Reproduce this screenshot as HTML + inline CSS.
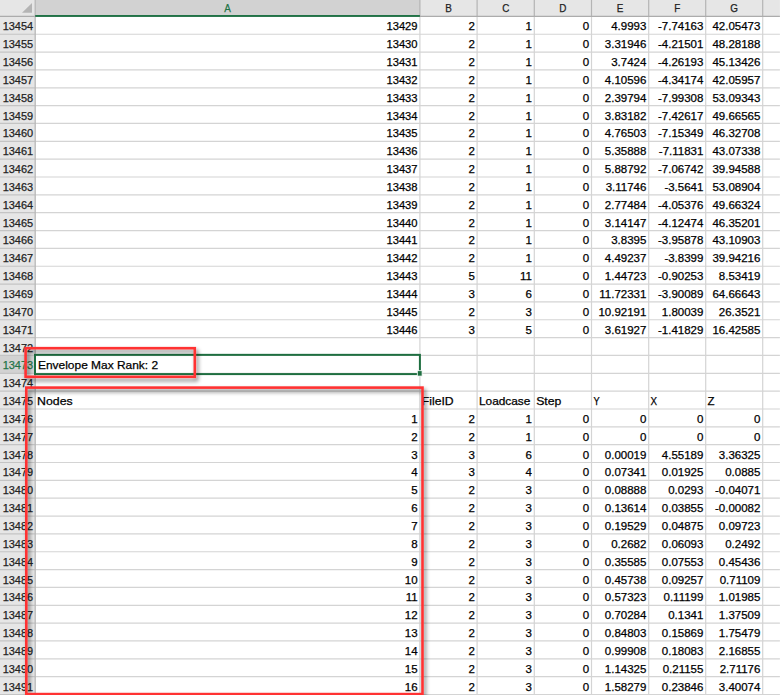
<!DOCTYPE html>
<html><head><meta charset="utf-8"><style>
html,body{margin:0;padding:0;width:783px;height:695px;overflow:hidden;background:#fff}
svg{display:block;font-family:"Liberation Sans",sans-serif}
text{font-size:11.5px;fill:#000;stroke:#000;stroke-width:0.25px}
</style></head><body>
<svg width="783" height="695" viewBox="0 0 783 695">

<rect x="0" y="0" width="779.9" height="16.4" fill="#e6e6e6"/>
<rect x="35.2" y="0" width="384.7" height="16.4" fill="#d2d2d2"/>
<rect x="0" y="16.4" width="35.2" height="678.6" fill="#e6e6e6"/>
<rect x="0" y="355.45" width="35.2" height="17.845" fill="#d2d2d2"/>
<line x1="35.2" y1="34.24" x2="779.9" y2="34.24" stroke="#d4d4d4" stroke-width="1.2"/>
<line x1="35.2" y1="52.09" x2="779.9" y2="52.09" stroke="#d4d4d4" stroke-width="1.2"/>
<line x1="35.2" y1="69.94" x2="779.9" y2="69.94" stroke="#d4d4d4" stroke-width="1.2"/>
<line x1="35.2" y1="87.78" x2="779.9" y2="87.78" stroke="#d4d4d4" stroke-width="1.2"/>
<line x1="35.2" y1="105.62" x2="779.9" y2="105.62" stroke="#d4d4d4" stroke-width="1.2"/>
<line x1="35.2" y1="123.47" x2="779.9" y2="123.47" stroke="#d4d4d4" stroke-width="1.2"/>
<line x1="35.2" y1="141.31" x2="779.9" y2="141.31" stroke="#d4d4d4" stroke-width="1.2"/>
<line x1="35.2" y1="159.16" x2="779.9" y2="159.16" stroke="#d4d4d4" stroke-width="1.2"/>
<line x1="35.2" y1="177.00" x2="779.9" y2="177.00" stroke="#d4d4d4" stroke-width="1.2"/>
<line x1="35.2" y1="194.85" x2="779.9" y2="194.85" stroke="#d4d4d4" stroke-width="1.2"/>
<line x1="35.2" y1="212.69" x2="779.9" y2="212.69" stroke="#d4d4d4" stroke-width="1.2"/>
<line x1="35.2" y1="230.54" x2="779.9" y2="230.54" stroke="#d4d4d4" stroke-width="1.2"/>
<line x1="35.2" y1="248.38" x2="779.9" y2="248.38" stroke="#d4d4d4" stroke-width="1.2"/>
<line x1="35.2" y1="266.23" x2="779.9" y2="266.23" stroke="#d4d4d4" stroke-width="1.2"/>
<line x1="35.2" y1="284.07" x2="779.9" y2="284.07" stroke="#d4d4d4" stroke-width="1.2"/>
<line x1="35.2" y1="301.92" x2="779.9" y2="301.92" stroke="#d4d4d4" stroke-width="1.2"/>
<line x1="35.2" y1="319.76" x2="779.9" y2="319.76" stroke="#d4d4d4" stroke-width="1.2"/>
<line x1="35.2" y1="337.61" x2="779.9" y2="337.61" stroke="#d4d4d4" stroke-width="1.2"/>
<line x1="35.2" y1="355.45" x2="779.9" y2="355.45" stroke="#d4d4d4" stroke-width="1.2"/>
<line x1="35.2" y1="373.30" x2="779.9" y2="373.30" stroke="#d4d4d4" stroke-width="1.2"/>
<line x1="35.2" y1="391.14" x2="779.9" y2="391.14" stroke="#d4d4d4" stroke-width="1.2"/>
<line x1="35.2" y1="408.99" x2="779.9" y2="408.99" stroke="#d4d4d4" stroke-width="1.2"/>
<line x1="35.2" y1="426.83" x2="779.9" y2="426.83" stroke="#d4d4d4" stroke-width="1.2"/>
<line x1="35.2" y1="444.68" x2="779.9" y2="444.68" stroke="#d4d4d4" stroke-width="1.2"/>
<line x1="35.2" y1="462.52" x2="779.9" y2="462.52" stroke="#d4d4d4" stroke-width="1.2"/>
<line x1="35.2" y1="480.37" x2="779.9" y2="480.37" stroke="#d4d4d4" stroke-width="1.2"/>
<line x1="35.2" y1="498.21" x2="779.9" y2="498.21" stroke="#d4d4d4" stroke-width="1.2"/>
<line x1="35.2" y1="516.06" x2="779.9" y2="516.06" stroke="#d4d4d4" stroke-width="1.2"/>
<line x1="35.2" y1="533.90" x2="779.9" y2="533.90" stroke="#d4d4d4" stroke-width="1.2"/>
<line x1="35.2" y1="551.75" x2="779.9" y2="551.75" stroke="#d4d4d4" stroke-width="1.2"/>
<line x1="35.2" y1="569.59" x2="779.9" y2="569.59" stroke="#d4d4d4" stroke-width="1.2"/>
<line x1="35.2" y1="587.44" x2="779.9" y2="587.44" stroke="#d4d4d4" stroke-width="1.2"/>
<line x1="35.2" y1="605.28" x2="779.9" y2="605.28" stroke="#d4d4d4" stroke-width="1.2"/>
<line x1="35.2" y1="623.13" x2="779.9" y2="623.13" stroke="#d4d4d4" stroke-width="1.2"/>
<line x1="35.2" y1="640.97" x2="779.9" y2="640.97" stroke="#d4d4d4" stroke-width="1.2"/>
<line x1="35.2" y1="658.82" x2="779.9" y2="658.82" stroke="#d4d4d4" stroke-width="1.2"/>
<line x1="35.2" y1="676.66" x2="779.9" y2="676.66" stroke="#d4d4d4" stroke-width="1.2"/>
<line x1="35.2" y1="694.51" x2="779.9" y2="694.51" stroke="#d4d4d4" stroke-width="1.2"/>
<line x1="419.9" y1="16.4" x2="419.9" y2="695" stroke="#d4d4d4" stroke-width="1.2"/>
<line x1="477.1" y1="16.4" x2="477.1" y2="695" stroke="#d4d4d4" stroke-width="1.2"/>
<line x1="534.3" y1="16.4" x2="534.3" y2="695" stroke="#d4d4d4" stroke-width="1.2"/>
<line x1="591.5" y1="16.4" x2="591.5" y2="695" stroke="#d4d4d4" stroke-width="1.2"/>
<line x1="648.7" y1="16.4" x2="648.7" y2="695" stroke="#d4d4d4" stroke-width="1.2"/>
<line x1="705.7" y1="16.4" x2="705.7" y2="695" stroke="#d4d4d4" stroke-width="1.2"/>
<line x1="762.7" y1="16.4" x2="762.7" y2="695" stroke="#d4d4d4" stroke-width="1.2"/>
<line x1="0" y1="34.24" x2="35.2" y2="34.24" stroke="#c4c4c4" stroke-width="1.2"/>
<line x1="0" y1="52.09" x2="35.2" y2="52.09" stroke="#c4c4c4" stroke-width="1.2"/>
<line x1="0" y1="69.94" x2="35.2" y2="69.94" stroke="#c4c4c4" stroke-width="1.2"/>
<line x1="0" y1="87.78" x2="35.2" y2="87.78" stroke="#c4c4c4" stroke-width="1.2"/>
<line x1="0" y1="105.62" x2="35.2" y2="105.62" stroke="#c4c4c4" stroke-width="1.2"/>
<line x1="0" y1="123.47" x2="35.2" y2="123.47" stroke="#c4c4c4" stroke-width="1.2"/>
<line x1="0" y1="141.31" x2="35.2" y2="141.31" stroke="#c4c4c4" stroke-width="1.2"/>
<line x1="0" y1="159.16" x2="35.2" y2="159.16" stroke="#c4c4c4" stroke-width="1.2"/>
<line x1="0" y1="177.00" x2="35.2" y2="177.00" stroke="#c4c4c4" stroke-width="1.2"/>
<line x1="0" y1="194.85" x2="35.2" y2="194.85" stroke="#c4c4c4" stroke-width="1.2"/>
<line x1="0" y1="212.69" x2="35.2" y2="212.69" stroke="#c4c4c4" stroke-width="1.2"/>
<line x1="0" y1="230.54" x2="35.2" y2="230.54" stroke="#c4c4c4" stroke-width="1.2"/>
<line x1="0" y1="248.38" x2="35.2" y2="248.38" stroke="#c4c4c4" stroke-width="1.2"/>
<line x1="0" y1="266.23" x2="35.2" y2="266.23" stroke="#c4c4c4" stroke-width="1.2"/>
<line x1="0" y1="284.07" x2="35.2" y2="284.07" stroke="#c4c4c4" stroke-width="1.2"/>
<line x1="0" y1="301.92" x2="35.2" y2="301.92" stroke="#c4c4c4" stroke-width="1.2"/>
<line x1="0" y1="319.76" x2="35.2" y2="319.76" stroke="#c4c4c4" stroke-width="1.2"/>
<line x1="0" y1="337.61" x2="35.2" y2="337.61" stroke="#c4c4c4" stroke-width="1.2"/>
<line x1="0" y1="355.45" x2="35.2" y2="355.45" stroke="#c4c4c4" stroke-width="1.2"/>
<line x1="0" y1="373.30" x2="35.2" y2="373.30" stroke="#c4c4c4" stroke-width="1.2"/>
<line x1="0" y1="391.14" x2="35.2" y2="391.14" stroke="#c4c4c4" stroke-width="1.2"/>
<line x1="0" y1="408.99" x2="35.2" y2="408.99" stroke="#c4c4c4" stroke-width="1.2"/>
<line x1="0" y1="426.83" x2="35.2" y2="426.83" stroke="#c4c4c4" stroke-width="1.2"/>
<line x1="0" y1="444.68" x2="35.2" y2="444.68" stroke="#c4c4c4" stroke-width="1.2"/>
<line x1="0" y1="462.52" x2="35.2" y2="462.52" stroke="#c4c4c4" stroke-width="1.2"/>
<line x1="0" y1="480.37" x2="35.2" y2="480.37" stroke="#c4c4c4" stroke-width="1.2"/>
<line x1="0" y1="498.21" x2="35.2" y2="498.21" stroke="#c4c4c4" stroke-width="1.2"/>
<line x1="0" y1="516.06" x2="35.2" y2="516.06" stroke="#c4c4c4" stroke-width="1.2"/>
<line x1="0" y1="533.90" x2="35.2" y2="533.90" stroke="#c4c4c4" stroke-width="1.2"/>
<line x1="0" y1="551.75" x2="35.2" y2="551.75" stroke="#c4c4c4" stroke-width="1.2"/>
<line x1="0" y1="569.59" x2="35.2" y2="569.59" stroke="#c4c4c4" stroke-width="1.2"/>
<line x1="0" y1="587.44" x2="35.2" y2="587.44" stroke="#c4c4c4" stroke-width="1.2"/>
<line x1="0" y1="605.28" x2="35.2" y2="605.28" stroke="#c4c4c4" stroke-width="1.2"/>
<line x1="0" y1="623.13" x2="35.2" y2="623.13" stroke="#c4c4c4" stroke-width="1.2"/>
<line x1="0" y1="640.97" x2="35.2" y2="640.97" stroke="#c4c4c4" stroke-width="1.2"/>
<line x1="0" y1="658.82" x2="35.2" y2="658.82" stroke="#c4c4c4" stroke-width="1.2"/>
<line x1="0" y1="676.66" x2="35.2" y2="676.66" stroke="#c4c4c4" stroke-width="1.2"/>
<line x1="0" y1="694.51" x2="35.2" y2="694.51" stroke="#c4c4c4" stroke-width="1.2"/>
<line x1="419.9" y1="0" x2="419.9" y2="16.4" stroke="#b4b4b4" stroke-width="1.2"/>
<line x1="477.1" y1="0" x2="477.1" y2="16.4" stroke="#b4b4b4" stroke-width="1.2"/>
<line x1="534.3" y1="0" x2="534.3" y2="16.4" stroke="#b4b4b4" stroke-width="1.2"/>
<line x1="591.5" y1="0" x2="591.5" y2="16.4" stroke="#b4b4b4" stroke-width="1.2"/>
<line x1="648.7" y1="0" x2="648.7" y2="16.4" stroke="#b4b4b4" stroke-width="1.2"/>
<line x1="705.7" y1="0" x2="705.7" y2="16.4" stroke="#b4b4b4" stroke-width="1.2"/>
<line x1="762.7" y1="0" x2="762.7" y2="16.4" stroke="#b4b4b4" stroke-width="1.2"/>
<line x1="0" y1="16.4" x2="779.9" y2="16.4" stroke="#acacac" stroke-width="1.2"/>
<line x1="35.2" y1="0" x2="35.2" y2="695" stroke="#b8b8b8" stroke-width="1.3"/>
<rect x="35.2" y="15" width="384.7" height="1.9" fill="#217346"/>
<polygon points="32,3.1 32,12.8 22,12.8" fill="#b4b4b4"/>
<text x="227.5" y="11.6" text-anchor="middle" textLength="6.60" lengthAdjust="spacingAndGlyphs" style="fill:#217346;stroke:#217346">A</text>
<text x="448.5" y="11.6" text-anchor="middle" textLength="6.60" lengthAdjust="spacingAndGlyphs" style="fill:#222;stroke:#222">B</text>
<text x="505.7" y="11.6" text-anchor="middle" textLength="7.14" lengthAdjust="spacingAndGlyphs" style="fill:#222;stroke:#222">C</text>
<text x="562.9" y="11.6" text-anchor="middle" textLength="7.14" lengthAdjust="spacingAndGlyphs" style="fill:#222;stroke:#222">D</text>
<text x="620.1" y="11.6" text-anchor="middle" textLength="6.60" lengthAdjust="spacingAndGlyphs" style="fill:#222;stroke:#222">E</text>
<text x="677.2" y="11.6" text-anchor="middle" textLength="6.04" lengthAdjust="spacingAndGlyphs" style="fill:#222;stroke:#222">F</text>
<text x="734.2" y="11.6" text-anchor="middle" textLength="7.69" lengthAdjust="spacingAndGlyphs" style="fill:#222;stroke:#222">G</text>
<text x="33.2" y="30.35" text-anchor="end" textLength="30.54" lengthAdjust="spacingAndGlyphs" style="fill:#222;stroke:#222">13454</text>
<text x="33.2" y="48.19" text-anchor="end" textLength="30.54" lengthAdjust="spacingAndGlyphs" style="fill:#222;stroke:#222">13455</text>
<text x="33.2" y="66.04" text-anchor="end" textLength="30.54" lengthAdjust="spacingAndGlyphs" style="fill:#222;stroke:#222">13456</text>
<text x="33.2" y="83.89" text-anchor="end" textLength="30.54" lengthAdjust="spacingAndGlyphs" style="fill:#222;stroke:#222">13457</text>
<text x="33.2" y="101.73" text-anchor="end" textLength="30.54" lengthAdjust="spacingAndGlyphs" style="fill:#222;stroke:#222">13458</text>
<text x="33.2" y="119.58" text-anchor="end" textLength="30.54" lengthAdjust="spacingAndGlyphs" style="fill:#222;stroke:#222">13459</text>
<text x="33.2" y="137.42" text-anchor="end" textLength="30.54" lengthAdjust="spacingAndGlyphs" style="fill:#222;stroke:#222">13460</text>
<text x="33.2" y="155.26" text-anchor="end" textLength="30.54" lengthAdjust="spacingAndGlyphs" style="fill:#222;stroke:#222">13461</text>
<text x="33.2" y="173.11" text-anchor="end" textLength="30.54" lengthAdjust="spacingAndGlyphs" style="fill:#222;stroke:#222">13462</text>
<text x="33.2" y="190.95" text-anchor="end" textLength="30.54" lengthAdjust="spacingAndGlyphs" style="fill:#222;stroke:#222">13463</text>
<text x="33.2" y="208.80" text-anchor="end" textLength="30.54" lengthAdjust="spacingAndGlyphs" style="fill:#222;stroke:#222">13464</text>
<text x="33.2" y="226.64" text-anchor="end" textLength="30.54" lengthAdjust="spacingAndGlyphs" style="fill:#222;stroke:#222">13465</text>
<text x="33.2" y="244.49" text-anchor="end" textLength="30.54" lengthAdjust="spacingAndGlyphs" style="fill:#222;stroke:#222">13466</text>
<text x="33.2" y="262.33" text-anchor="end" textLength="30.54" lengthAdjust="spacingAndGlyphs" style="fill:#222;stroke:#222">13467</text>
<text x="33.2" y="280.18" text-anchor="end" textLength="30.54" lengthAdjust="spacingAndGlyphs" style="fill:#222;stroke:#222">13468</text>
<text x="33.2" y="298.02" text-anchor="end" textLength="30.54" lengthAdjust="spacingAndGlyphs" style="fill:#222;stroke:#222">13469</text>
<text x="33.2" y="315.87" text-anchor="end" textLength="30.54" lengthAdjust="spacingAndGlyphs" style="fill:#222;stroke:#222">13470</text>
<text x="33.2" y="333.71" text-anchor="end" textLength="30.54" lengthAdjust="spacingAndGlyphs" style="fill:#222;stroke:#222">13471</text>
<text x="33.2" y="351.56" text-anchor="end" textLength="30.54" lengthAdjust="spacingAndGlyphs" style="fill:#222;stroke:#222">13472</text>
<text x="33.2" y="369.40" text-anchor="end" textLength="30.54" lengthAdjust="spacingAndGlyphs" style="fill:#217346;stroke:#217346">13473</text>
<text x="33.2" y="387.25" text-anchor="end" textLength="30.54" lengthAdjust="spacingAndGlyphs" style="fill:#222;stroke:#222">13474</text>
<text x="33.2" y="405.09" text-anchor="end" textLength="30.54" lengthAdjust="spacingAndGlyphs" style="fill:#222;stroke:#222">13475</text>
<text x="33.2" y="422.94" text-anchor="end" textLength="30.54" lengthAdjust="spacingAndGlyphs" style="fill:#222;stroke:#222">13476</text>
<text x="33.2" y="440.78" text-anchor="end" textLength="30.54" lengthAdjust="spacingAndGlyphs" style="fill:#222;stroke:#222">13477</text>
<text x="33.2" y="458.63" text-anchor="end" textLength="30.54" lengthAdjust="spacingAndGlyphs" style="fill:#222;stroke:#222">13478</text>
<text x="33.2" y="476.47" text-anchor="end" textLength="30.54" lengthAdjust="spacingAndGlyphs" style="fill:#222;stroke:#222">13479</text>
<text x="33.2" y="494.32" text-anchor="end" textLength="30.54" lengthAdjust="spacingAndGlyphs" style="fill:#222;stroke:#222">13480</text>
<text x="33.2" y="512.16" text-anchor="end" textLength="30.54" lengthAdjust="spacingAndGlyphs" style="fill:#222;stroke:#222">13481</text>
<text x="33.2" y="530.01" text-anchor="end" textLength="30.54" lengthAdjust="spacingAndGlyphs" style="fill:#222;stroke:#222">13482</text>
<text x="33.2" y="547.86" text-anchor="end" textLength="30.54" lengthAdjust="spacingAndGlyphs" style="fill:#222;stroke:#222">13483</text>
<text x="33.2" y="565.70" text-anchor="end" textLength="30.54" lengthAdjust="spacingAndGlyphs" style="fill:#222;stroke:#222">13484</text>
<text x="33.2" y="583.54" text-anchor="end" textLength="30.54" lengthAdjust="spacingAndGlyphs" style="fill:#222;stroke:#222">13485</text>
<text x="33.2" y="601.39" text-anchor="end" textLength="30.54" lengthAdjust="spacingAndGlyphs" style="fill:#222;stroke:#222">13486</text>
<text x="33.2" y="619.24" text-anchor="end" textLength="30.54" lengthAdjust="spacingAndGlyphs" style="fill:#222;stroke:#222">13487</text>
<text x="33.2" y="637.08" text-anchor="end" textLength="30.54" lengthAdjust="spacingAndGlyphs" style="fill:#222;stroke:#222">13488</text>
<text x="33.2" y="654.92" text-anchor="end" textLength="30.54" lengthAdjust="spacingAndGlyphs" style="fill:#222;stroke:#222">13489</text>
<text x="33.2" y="672.77" text-anchor="end" textLength="30.54" lengthAdjust="spacingAndGlyphs" style="fill:#222;stroke:#222">13490</text>
<text x="33.2" y="690.62" text-anchor="end" textLength="30.54" lengthAdjust="spacingAndGlyphs" style="fill:#222;stroke:#222">13491</text>
<text x="417.6" y="30.35" text-anchor="end" textLength="31.18" lengthAdjust="spacingAndGlyphs">13429</text>
<text x="474.8" y="30.35" text-anchor="end">2</text>
<text x="532.0" y="30.35" text-anchor="end">1</text>
<text x="589.2" y="30.35" text-anchor="end">0</text>
<text x="646.4" y="30.35" text-anchor="end">4.9993</text>
<text x="703.4" y="30.35" text-anchor="end">-7.74163</text>
<text x="760.4" y="30.35" text-anchor="end">42.05473</text>
<text x="417.6" y="48.19" text-anchor="end" textLength="31.18" lengthAdjust="spacingAndGlyphs">13430</text>
<text x="474.8" y="48.19" text-anchor="end">2</text>
<text x="532.0" y="48.19" text-anchor="end">1</text>
<text x="589.2" y="48.19" text-anchor="end">0</text>
<text x="646.4" y="48.19" text-anchor="end">3.31946</text>
<text x="703.4" y="48.19" text-anchor="end">-4.21501</text>
<text x="760.4" y="48.19" text-anchor="end">48.28188</text>
<text x="417.6" y="66.04" text-anchor="end" textLength="31.18" lengthAdjust="spacingAndGlyphs">13431</text>
<text x="474.8" y="66.04" text-anchor="end">2</text>
<text x="532.0" y="66.04" text-anchor="end">1</text>
<text x="589.2" y="66.04" text-anchor="end">0</text>
<text x="646.4" y="66.04" text-anchor="end">3.7424</text>
<text x="703.4" y="66.04" text-anchor="end">-4.26193</text>
<text x="760.4" y="66.04" text-anchor="end">45.13426</text>
<text x="417.6" y="83.89" text-anchor="end" textLength="31.18" lengthAdjust="spacingAndGlyphs">13432</text>
<text x="474.8" y="83.89" text-anchor="end">2</text>
<text x="532.0" y="83.89" text-anchor="end">1</text>
<text x="589.2" y="83.89" text-anchor="end">0</text>
<text x="646.4" y="83.89" text-anchor="end">4.10596</text>
<text x="703.4" y="83.89" text-anchor="end">-4.34174</text>
<text x="760.4" y="83.89" text-anchor="end">42.05957</text>
<text x="417.6" y="101.73" text-anchor="end" textLength="31.18" lengthAdjust="spacingAndGlyphs">13433</text>
<text x="474.8" y="101.73" text-anchor="end">2</text>
<text x="532.0" y="101.73" text-anchor="end">1</text>
<text x="589.2" y="101.73" text-anchor="end">0</text>
<text x="646.4" y="101.73" text-anchor="end">2.39794</text>
<text x="703.4" y="101.73" text-anchor="end">-7.99308</text>
<text x="760.4" y="101.73" text-anchor="end">53.09343</text>
<text x="417.6" y="119.58" text-anchor="end" textLength="31.18" lengthAdjust="spacingAndGlyphs">13434</text>
<text x="474.8" y="119.58" text-anchor="end">2</text>
<text x="532.0" y="119.58" text-anchor="end">1</text>
<text x="589.2" y="119.58" text-anchor="end">0</text>
<text x="646.4" y="119.58" text-anchor="end">3.83182</text>
<text x="703.4" y="119.58" text-anchor="end">-7.42617</text>
<text x="760.4" y="119.58" text-anchor="end">49.66565</text>
<text x="417.6" y="137.42" text-anchor="end" textLength="31.18" lengthAdjust="spacingAndGlyphs">13435</text>
<text x="474.8" y="137.42" text-anchor="end">2</text>
<text x="532.0" y="137.42" text-anchor="end">1</text>
<text x="589.2" y="137.42" text-anchor="end">0</text>
<text x="646.4" y="137.42" text-anchor="end">4.76503</text>
<text x="703.4" y="137.42" text-anchor="end">-7.15349</text>
<text x="760.4" y="137.42" text-anchor="end">46.32708</text>
<text x="417.6" y="155.26" text-anchor="end" textLength="31.18" lengthAdjust="spacingAndGlyphs">13436</text>
<text x="474.8" y="155.26" text-anchor="end">2</text>
<text x="532.0" y="155.26" text-anchor="end">1</text>
<text x="589.2" y="155.26" text-anchor="end">0</text>
<text x="646.4" y="155.26" text-anchor="end">5.35888</text>
<text x="703.4" y="155.26" text-anchor="end">-7.11831</text>
<text x="760.4" y="155.26" text-anchor="end">43.07338</text>
<text x="417.6" y="173.11" text-anchor="end" textLength="31.18" lengthAdjust="spacingAndGlyphs">13437</text>
<text x="474.8" y="173.11" text-anchor="end">2</text>
<text x="532.0" y="173.11" text-anchor="end">1</text>
<text x="589.2" y="173.11" text-anchor="end">0</text>
<text x="646.4" y="173.11" text-anchor="end">5.88792</text>
<text x="703.4" y="173.11" text-anchor="end">-7.06742</text>
<text x="760.4" y="173.11" text-anchor="end">39.94588</text>
<text x="417.6" y="190.95" text-anchor="end" textLength="31.18" lengthAdjust="spacingAndGlyphs">13438</text>
<text x="474.8" y="190.95" text-anchor="end">2</text>
<text x="532.0" y="190.95" text-anchor="end">1</text>
<text x="589.2" y="190.95" text-anchor="end">0</text>
<text x="646.4" y="190.95" text-anchor="end">3.11746</text>
<text x="703.4" y="190.95" text-anchor="end">-3.5641</text>
<text x="760.4" y="190.95" text-anchor="end">53.08904</text>
<text x="417.6" y="208.80" text-anchor="end" textLength="31.18" lengthAdjust="spacingAndGlyphs">13439</text>
<text x="474.8" y="208.80" text-anchor="end">2</text>
<text x="532.0" y="208.80" text-anchor="end">1</text>
<text x="589.2" y="208.80" text-anchor="end">0</text>
<text x="646.4" y="208.80" text-anchor="end">2.77484</text>
<text x="703.4" y="208.80" text-anchor="end">-4.05376</text>
<text x="760.4" y="208.80" text-anchor="end">49.66324</text>
<text x="417.6" y="226.64" text-anchor="end" textLength="31.18" lengthAdjust="spacingAndGlyphs">13440</text>
<text x="474.8" y="226.64" text-anchor="end">2</text>
<text x="532.0" y="226.64" text-anchor="end">1</text>
<text x="589.2" y="226.64" text-anchor="end">0</text>
<text x="646.4" y="226.64" text-anchor="end">3.14147</text>
<text x="703.4" y="226.64" text-anchor="end">-4.12474</text>
<text x="760.4" y="226.64" text-anchor="end">46.35201</text>
<text x="417.6" y="244.49" text-anchor="end" textLength="31.18" lengthAdjust="spacingAndGlyphs">13441</text>
<text x="474.8" y="244.49" text-anchor="end">2</text>
<text x="532.0" y="244.49" text-anchor="end">1</text>
<text x="589.2" y="244.49" text-anchor="end">0</text>
<text x="646.4" y="244.49" text-anchor="end">3.8395</text>
<text x="703.4" y="244.49" text-anchor="end">-3.95878</text>
<text x="760.4" y="244.49" text-anchor="end">43.10903</text>
<text x="417.6" y="262.33" text-anchor="end" textLength="31.18" lengthAdjust="spacingAndGlyphs">13442</text>
<text x="474.8" y="262.33" text-anchor="end">2</text>
<text x="532.0" y="262.33" text-anchor="end">1</text>
<text x="589.2" y="262.33" text-anchor="end">0</text>
<text x="646.4" y="262.33" text-anchor="end">4.49237</text>
<text x="703.4" y="262.33" text-anchor="end">-3.8399</text>
<text x="760.4" y="262.33" text-anchor="end">39.94216</text>
<text x="417.6" y="280.18" text-anchor="end" textLength="31.18" lengthAdjust="spacingAndGlyphs">13443</text>
<text x="474.8" y="280.18" text-anchor="end">5</text>
<text x="532.0" y="280.18" text-anchor="end">11</text>
<text x="589.2" y="280.18" text-anchor="end">0</text>
<text x="646.4" y="280.18" text-anchor="end">1.44723</text>
<text x="703.4" y="280.18" text-anchor="end">-0.90253</text>
<text x="760.4" y="280.18" text-anchor="end">8.53419</text>
<text x="417.6" y="298.02" text-anchor="end" textLength="31.18" lengthAdjust="spacingAndGlyphs">13444</text>
<text x="474.8" y="298.02" text-anchor="end">3</text>
<text x="532.0" y="298.02" text-anchor="end">6</text>
<text x="589.2" y="298.02" text-anchor="end">0</text>
<text x="646.4" y="298.02" text-anchor="end">11.72331</text>
<text x="703.4" y="298.02" text-anchor="end">-3.90089</text>
<text x="760.4" y="298.02" text-anchor="end">64.66643</text>
<text x="417.6" y="315.87" text-anchor="end" textLength="31.18" lengthAdjust="spacingAndGlyphs">13445</text>
<text x="474.8" y="315.87" text-anchor="end">2</text>
<text x="532.0" y="315.87" text-anchor="end">3</text>
<text x="589.2" y="315.87" text-anchor="end">0</text>
<text x="646.4" y="315.87" text-anchor="end">10.92191</text>
<text x="703.4" y="315.87" text-anchor="end">1.80039</text>
<text x="760.4" y="315.87" text-anchor="end">26.3521</text>
<text x="417.6" y="333.71" text-anchor="end" textLength="31.18" lengthAdjust="spacingAndGlyphs">13446</text>
<text x="474.8" y="333.71" text-anchor="end">3</text>
<text x="532.0" y="333.71" text-anchor="end">5</text>
<text x="589.2" y="333.71" text-anchor="end">0</text>
<text x="646.4" y="333.71" text-anchor="end">3.61927</text>
<text x="703.4" y="333.71" text-anchor="end">-1.41829</text>
<text x="760.4" y="333.71" text-anchor="end">16.42585</text>
<text x="38" y="369.40" textLength="120.10" lengthAdjust="spacingAndGlyphs">Envelope Max Rank: 2</text>
<text x="37.1" y="405.09" textLength="35.57" lengthAdjust="spacingAndGlyphs">Nodes</text>
<text x="421.8" y="405.09" textLength="31.83" lengthAdjust="spacingAndGlyphs">FileID</text>
<text x="479.0" y="405.09" textLength="51.37" lengthAdjust="spacingAndGlyphs">Loadcase</text>
<text x="536.2" y="405.09" textLength="25.20" lengthAdjust="spacingAndGlyphs">Step</text>
<text x="593.4" y="405.09" textLength="6.14" lengthAdjust="spacingAndGlyphs">Y</text>
<text x="650.6" y="405.09" textLength="6.52" lengthAdjust="spacingAndGlyphs">X</text>
<text x="707.6" y="405.09" textLength="7.03" lengthAdjust="spacingAndGlyphs">Z</text>
<text x="417.6" y="422.94" text-anchor="end">1</text>
<text x="474.8" y="422.94" text-anchor="end">2</text>
<text x="532.0" y="422.94" text-anchor="end">1</text>
<text x="589.2" y="422.94" text-anchor="end">0</text>
<text x="646.4" y="422.94" text-anchor="end">0</text>
<text x="703.4" y="422.94" text-anchor="end">0</text>
<text x="760.4" y="422.94" text-anchor="end">0</text>
<text x="417.6" y="440.78" text-anchor="end">2</text>
<text x="474.8" y="440.78" text-anchor="end">2</text>
<text x="532.0" y="440.78" text-anchor="end">1</text>
<text x="589.2" y="440.78" text-anchor="end">0</text>
<text x="646.4" y="440.78" text-anchor="end">0</text>
<text x="703.4" y="440.78" text-anchor="end">0</text>
<text x="760.4" y="440.78" text-anchor="end">0</text>
<text x="417.6" y="458.63" text-anchor="end">3</text>
<text x="474.8" y="458.63" text-anchor="end">3</text>
<text x="532.0" y="458.63" text-anchor="end">6</text>
<text x="589.2" y="458.63" text-anchor="end">0</text>
<text x="646.4" y="458.63" text-anchor="end">0.00019</text>
<text x="703.4" y="458.63" text-anchor="end">4.55189</text>
<text x="760.4" y="458.63" text-anchor="end">3.36325</text>
<text x="417.6" y="476.47" text-anchor="end">4</text>
<text x="474.8" y="476.47" text-anchor="end">3</text>
<text x="532.0" y="476.47" text-anchor="end">4</text>
<text x="589.2" y="476.47" text-anchor="end">0</text>
<text x="646.4" y="476.47" text-anchor="end">0.07341</text>
<text x="703.4" y="476.47" text-anchor="end">0.01925</text>
<text x="760.4" y="476.47" text-anchor="end">0.0885</text>
<text x="417.6" y="494.32" text-anchor="end">5</text>
<text x="474.8" y="494.32" text-anchor="end">2</text>
<text x="532.0" y="494.32" text-anchor="end">3</text>
<text x="589.2" y="494.32" text-anchor="end">0</text>
<text x="646.4" y="494.32" text-anchor="end">0.08888</text>
<text x="703.4" y="494.32" text-anchor="end">0.0293</text>
<text x="760.4" y="494.32" text-anchor="end">-0.04071</text>
<text x="417.6" y="512.16" text-anchor="end">6</text>
<text x="474.8" y="512.16" text-anchor="end">2</text>
<text x="532.0" y="512.16" text-anchor="end">3</text>
<text x="589.2" y="512.16" text-anchor="end">0</text>
<text x="646.4" y="512.16" text-anchor="end">0.13614</text>
<text x="703.4" y="512.16" text-anchor="end">0.03855</text>
<text x="760.4" y="512.16" text-anchor="end">-0.00082</text>
<text x="417.6" y="530.01" text-anchor="end">7</text>
<text x="474.8" y="530.01" text-anchor="end">2</text>
<text x="532.0" y="530.01" text-anchor="end">3</text>
<text x="589.2" y="530.01" text-anchor="end">0</text>
<text x="646.4" y="530.01" text-anchor="end">0.19529</text>
<text x="703.4" y="530.01" text-anchor="end">0.04875</text>
<text x="760.4" y="530.01" text-anchor="end">0.09723</text>
<text x="417.6" y="547.86" text-anchor="end">8</text>
<text x="474.8" y="547.86" text-anchor="end">2</text>
<text x="532.0" y="547.86" text-anchor="end">3</text>
<text x="589.2" y="547.86" text-anchor="end">0</text>
<text x="646.4" y="547.86" text-anchor="end">0.2682</text>
<text x="703.4" y="547.86" text-anchor="end">0.06093</text>
<text x="760.4" y="547.86" text-anchor="end">0.2492</text>
<text x="417.6" y="565.70" text-anchor="end">9</text>
<text x="474.8" y="565.70" text-anchor="end">2</text>
<text x="532.0" y="565.70" text-anchor="end">3</text>
<text x="589.2" y="565.70" text-anchor="end">0</text>
<text x="646.4" y="565.70" text-anchor="end">0.35585</text>
<text x="703.4" y="565.70" text-anchor="end">0.07553</text>
<text x="760.4" y="565.70" text-anchor="end">0.45436</text>
<text x="417.6" y="583.54" text-anchor="end">10</text>
<text x="474.8" y="583.54" text-anchor="end">2</text>
<text x="532.0" y="583.54" text-anchor="end">3</text>
<text x="589.2" y="583.54" text-anchor="end">0</text>
<text x="646.4" y="583.54" text-anchor="end">0.45738</text>
<text x="703.4" y="583.54" text-anchor="end">0.09257</text>
<text x="760.4" y="583.54" text-anchor="end">0.71109</text>
<text x="417.6" y="601.39" text-anchor="end">11</text>
<text x="474.8" y="601.39" text-anchor="end">2</text>
<text x="532.0" y="601.39" text-anchor="end">3</text>
<text x="589.2" y="601.39" text-anchor="end">0</text>
<text x="646.4" y="601.39" text-anchor="end">0.57323</text>
<text x="703.4" y="601.39" text-anchor="end">0.11199</text>
<text x="760.4" y="601.39" text-anchor="end">1.01985</text>
<text x="417.6" y="619.24" text-anchor="end">12</text>
<text x="474.8" y="619.24" text-anchor="end">2</text>
<text x="532.0" y="619.24" text-anchor="end">3</text>
<text x="589.2" y="619.24" text-anchor="end">0</text>
<text x="646.4" y="619.24" text-anchor="end">0.70284</text>
<text x="703.4" y="619.24" text-anchor="end">0.1341</text>
<text x="760.4" y="619.24" text-anchor="end">1.37509</text>
<text x="417.6" y="637.08" text-anchor="end">13</text>
<text x="474.8" y="637.08" text-anchor="end">2</text>
<text x="532.0" y="637.08" text-anchor="end">3</text>
<text x="589.2" y="637.08" text-anchor="end">0</text>
<text x="646.4" y="637.08" text-anchor="end">0.84803</text>
<text x="703.4" y="637.08" text-anchor="end">0.15869</text>
<text x="760.4" y="637.08" text-anchor="end">1.75479</text>
<text x="417.6" y="654.92" text-anchor="end">14</text>
<text x="474.8" y="654.92" text-anchor="end">2</text>
<text x="532.0" y="654.92" text-anchor="end">3</text>
<text x="589.2" y="654.92" text-anchor="end">0</text>
<text x="646.4" y="654.92" text-anchor="end">0.99908</text>
<text x="703.4" y="654.92" text-anchor="end">0.18083</text>
<text x="760.4" y="654.92" text-anchor="end">2.16855</text>
<text x="417.6" y="672.77" text-anchor="end">15</text>
<text x="474.8" y="672.77" text-anchor="end">2</text>
<text x="532.0" y="672.77" text-anchor="end">3</text>
<text x="589.2" y="672.77" text-anchor="end">0</text>
<text x="646.4" y="672.77" text-anchor="end">1.14325</text>
<text x="703.4" y="672.77" text-anchor="end">0.21155</text>
<text x="760.4" y="672.77" text-anchor="end">2.71176</text>
<text x="417.6" y="690.62" text-anchor="end">16</text>
<text x="474.8" y="690.62" text-anchor="end">2</text>
<text x="532.0" y="690.62" text-anchor="end">3</text>
<text x="589.2" y="690.62" text-anchor="end">0</text>
<text x="646.4" y="690.62" text-anchor="end">1.58279</text>
<text x="703.4" y="690.62" text-anchor="end">0.23846</text>
<text x="760.4" y="690.62" text-anchor="end">3.40074</text>
<rect x="35.00" y="354.85" width="384.90" height="19.24" fill="none" stroke="#1e6e40" stroke-width="2"/>
<rect x="417.30" y="370.70" width="4.8" height="5.4" fill="#1e6e40" stroke="#fff" stroke-width="0.8"/>
<defs><filter id="sh" x="-20%" y="-60%" width="140%" height="220%">
<feGaussianBlur in="SourceAlpha" stdDeviation="2.2"/><feOffset dx="1.5" dy="3" result="b"/>
<feComponentTransfer><feFuncA type="linear" slope="0.55"/></feComponentTransfer>
<feMerge><feMergeNode/><feMergeNode in="SourceGraphic"/></feMerge></filter></defs>
<rect x="25.6" y="348.2" width="169.2" height="28.6" fill="none" stroke="#ff3232" stroke-width="2.6" filter="url(#sh)"/>
<rect x="26.3" y="387.6" width="396.2" height="306.5" fill="none" stroke="#ff3232" stroke-width="2.6" filter="url(#sh)"/>
</svg></body></html>
